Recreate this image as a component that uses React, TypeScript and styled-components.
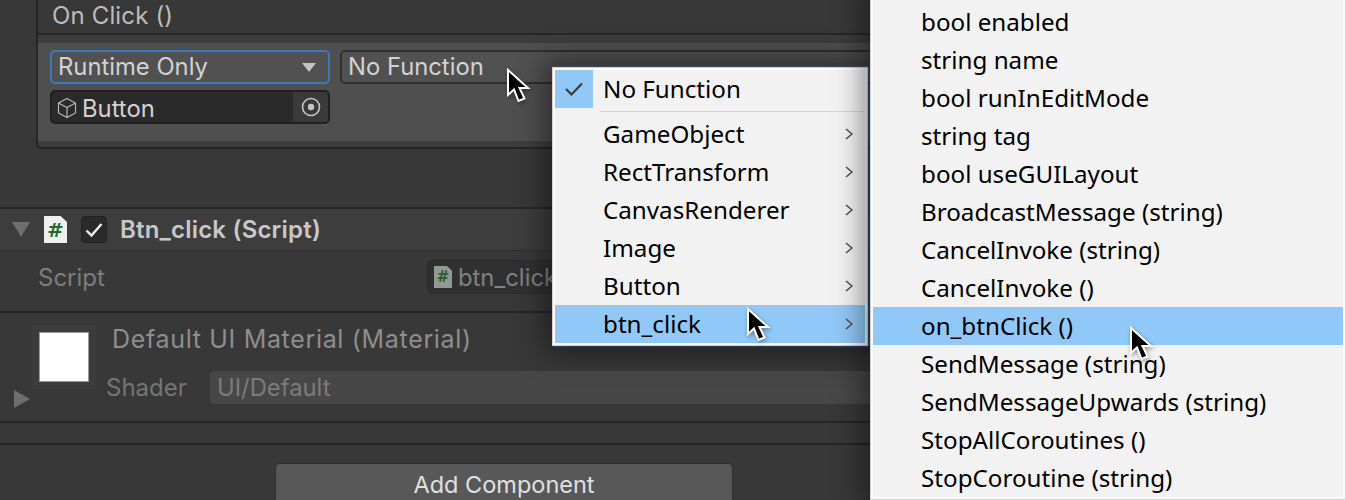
import React from 'react';
import styled, { createGlobalStyle } from 'styled-components';

const GlobalStyle = createGlobalStyle`
  html, body {
    margin: 0;
    padding: 0;
    background: #383838;
    overflow: hidden;
  }
`;

const Page = styled.div`
  position: relative;
  width: 1346px;
  height: 500px;
  overflow: hidden;
  background: #383838;
  font-family: Inter, "Noto Sans", sans-serif;
`;

const Inspector = styled.div`
  display: flex;
  flex-direction: column;
  height: 500px;
`;

/* On Click () event box */
const EventBox = styled.div`
  margin: 0 -10px 0 36px;
  height: 149px;
  flex: none;
  border-left: 2px solid #262626;
  border-bottom: 2px solid #262626;
  border-bottom-left-radius: 5px;
  box-sizing: border-box;
  background: #3d3d3d;
`;

const EventHeader = styled.div`
  height: 35px;
  box-sizing: border-box;
  background: #383838;
  border-bottom: 2px solid #272727;
  padding: 0 0 3px 14px;
  display: flex;
  align-items: center;
  font-size: 24px;
  letter-spacing: 0.15px;
  color: #bdbdbd;
`;

const EventBody = styled.div`
  margin-top: 8px;
  height: 98px;
  box-sizing: border-box;
  background: #4f4f4f;
  padding: 7px 12px;
  display: grid;
  grid-template-columns: 280px 1fr;
  grid-auto-rows: 34px;
  column-gap: 10px;
  row-gap: 6px;
`;

const Dropdown = styled.div<{ $focused?: boolean }>`
  box-sizing: border-box;
  display: flex;
  align-items: center;
  justify-content: space-between;
  padding: 0 8px 2px 6px;
  border-radius: 5px;
  background: #515151;
  border: 2px solid ${(p) => (p.$focused ? '#3a79bb' : '#303030')};
  font-size: 23.8px;
  color: #d2d2d2;
  white-space: nowrap;
`;

const Caret = styled.span`
  width: 0;
  height: 0;
  margin: 2px 4px 0 0;
  border-left: 7px solid transparent;
  border-right: 7px solid transparent;
  border-top: 9px solid #c4c4c4;
`;

const ObjectField = styled.div`
  box-sizing: border-box;
  display: flex;
  align-items: center;
  border-radius: 5px;
  background: #2a2a2a;
  border: 2px solid #212121;
  font-size: 23.8px;
  color: #d2d2d2;
  overflow: hidden;
`;

const ObjectName = styled.span`
  flex: 1;
  display: flex;
  align-items: center;
  gap: 5px;
  padding: 2px 0 0 5px;
`;

const ObjectPicker = styled.span`
  width: 35px;
  align-self: stretch;
  background: #3a3a3a;
  display: flex;
  align-items: center;
  justify-content: center;
`;

/* Btn_click (Script) component */
const ComponentHeader = styled.div`
  margin-top: 58px;
  height: 44px;
  flex: none;
  box-sizing: border-box;
  border-top: 2px solid #272727;
  border-bottom: 1px solid #303030;
  background: #3d3d3d;
  display: flex;
  align-items: center;
  padding-left: 12px;
`;

const FoldDown = styled.span`
  width: 0;
  height: 0;
  border-left: 9px solid transparent;
  border-right: 9px solid transparent;
  border-top: 15px solid #6e6e6e;
  margin-right: 14px;
`;

const ScriptIcon = styled.span<{ $dim?: boolean; $size?: number }>`
  flex: none;
  display: inline-flex;
  align-items: center;
  justify-content: center;
  width: ${(p) => p.$size ?? 23}px;
  height: ${(p) => (p.$size ?? 23) + 4}px;
  background: ${(p) => (p.$dim ? '#8f9a90' : '#efefef')};
  clip-path: polygon(0 0, 72% 0, 100% 22%, 100% 100%, 0 100%);
  color: ${(p) => (p.$dim ? '#2f5a33' : '#1f6b2a')};
  font-family: "DejaVu Sans", sans-serif;
  font-weight: 700;
  font-size: ${(p) => (p.$dim ? 15 : 20)}px;
`;

const Toggle = styled.span`
  width: 26px;
  height: 27px;
  margin: 0 13px 0 14px;
  box-sizing: border-box;
  border-radius: 4px;
  background: #2a2a2a;
  border: 1px solid #222;
  display: flex;
  align-items: center;
  justify-content: center;
`;

const ComponentTitle = styled.span`
  font-size: 24px;
  font-weight: 600;
  letter-spacing: 0.2px;
  color: #c8c8c8;
`;

const ScriptRow = styled.div`
  height: 62px;
  flex: none;
  box-sizing: border-box;
  padding: 9px 0 0 38px;
  display: flex;
  align-items: flex-start;
  border-bottom: 2px solid #252525;
`;

const FieldLabel = styled.span`
  width: 389px;
  line-height: 36px;
  font-size: 24px;
  color: #7d7d7d;
`;

const DisabledField = styled.div`
  flex: 1;
  height: 34px;
  box-sizing: border-box;
  border-radius: 5px;
  background: #303030;
  border: 1px solid #2b2b2b;
  padding-left: 6px;
  display: flex;
  align-items: center;
  gap: 6px;
  font-size: 23.8px;
  color: #808080;
`;

/* material block */
const MaterialRow = styled.div`
  height: 110px;
  flex: none;
  box-sizing: border-box;
  position: relative;
  display: flex;
  border-bottom: 2px solid #252525;
`;

const Preview = styled.div`
  flex: none;
  width: 64px;
  height: 64px;
  margin: 12px 0 0 32px;
  background: #3c3c3c;
  display: flex;
  align-items: center;
  justify-content: center;
`;

const Swatch = styled.div`
  width: 50px;
  height: 50px;
  box-sizing: border-box;
  background: #fff;
  border: 1px solid #9a9a9a;
`;

const FoldRight = styled.span`
  position: absolute;
  left: 14px;
  top: 77px;
  width: 0;
  height: 0;
  border-top: 9px solid transparent;
  border-bottom: 9px solid transparent;
  border-left: 16px solid #6e6e6e;
`;

const MaterialInfo = styled.div`
  flex: 1;
  padding: 9px 0 0 10px;
  display: flex;
  flex-direction: column;
`;

const MaterialTitle = styled.div`
  margin-left: 6px;
  font-size: 25px;
  letter-spacing: 0.67px;
  line-height: 34px;
  color: #8e8e8e;
`;

const ShaderRow = styled.div`
  margin-top: 15px;
  display: flex;
`;

const ShaderLabel = styled.span`
  width: 104px;
  line-height: 33px;
  font-size: 24px;
  color: #757575;
`;

const ShaderField = styled.div`
  flex: 1;
  height: 33px;
  box-sizing: border-box;
  padding-left: 7px;
  border-radius: 4px;
  background: #474747;
  display: flex;
  align-items: center;
  font-size: 23.8px;
  color: #7b7b7b;
`;

const EmptyRow = styled.div`
  height: 20px;
  flex: none;
  border-bottom: 2px solid #252525;
`;

const Footer = styled.div`
  flex: 1;
  padding-top: 18px;
  display: flex;
  padding-left: 275px;
`;

const AddButton = styled.div`
  width: 458px;
  height: 37px;
  box-sizing: border-box;
  padding-top: 6px;
  background: #585858;
  border: 1px solid #2f2f2f;
  border-bottom: none;
  border-radius: 5px 5px 0 0;
  text-align: center;
  font-size: 23.5px;
  line-height: 30px;
  color: #e0e0e0;
`;

/* popup menus, they lie over the inspector */
const Menu = styled.div<{ $left: number; $top: number; $width: number; $height: number; $pad: number }>`
  position: absolute;
  left: ${(p) => p.$left}px;
  top: ${(p) => p.$top}px;
  width: ${(p) => p.$width}px;
  height: ${(p) => p.$height}px;
  box-sizing: border-box;
  padding: ${(p) => p.$pad}px 2px 0;
  background: #f2f2f2;
  border: 1px solid #d0d0d0;
  box-shadow: inset 0 0 0 2px #fbfbfb, 2px 0 3px rgba(66, 120, 190, 0.55), 0 0 26px 8px rgba(0, 0, 0, 0.42);
  font-family: "Noto Sans", sans-serif;
  font-size: 24.2px;
  color: #000;
`;

const Item = styled.div<{ $active?: boolean; $indent: number }>`
  position: relative;
  height: 38px;
  box-sizing: border-box;
  padding-bottom: 2px;
  display: flex;
  align-items: center;
  padding-left: ${(p) => p.$indent}px;
  white-space: nowrap;
  background: ${(p) => (p.$active ? '#90c8f7' : 'transparent')};
`;

const CheckMark = styled.span`
  position: absolute;
  left: 0;
  top: 0;
  width: 38px;
  height: 38px;
  background: #90c8f7;
  display: flex;
  align-items: center;
  justify-content: center;
`;

const Separator = styled.div`
  height: 1px;
  margin: 3px 1px 3px 45px;
  background: #d4d4d4;
`;

const Chevron = styled.svg`
  position: absolute;
  right: 12px;
  top: 13px;
`;

const Pointer = styled.svg<{ $left: number; $top: number }>`
  position: absolute;
  left: ${(p) => p.$left}px;
  top: ${(p) => p.$top}px;
  filter: drop-shadow(1px 2px 2px rgba(0, 0, 0, 0.35));
`;

const Arrow = ({ left, top }: { left: number; top: number }) => (
  <Pointer $left={left} $top={top} width="26" height="38" viewBox="0 0 26 38">
    <path
      d="M2 2 L2 27 L8 21.5 L12.5 33 L18.5 30.5 L13.5 20 L22 20 Z"
      fill="#000"
      stroke="#fff"
      strokeWidth="2"
      strokeLinejoin="miter"
    />
  </Pointer>
);

const More = () => (
  <Chevron width="8" height="12" viewBox="0 0 8 12">
    <path d="M1 1 L7 6 L1 11" fill="none" stroke="#444" strokeWidth="1.3" />
  </Chevron>
);

const firstMenu = ['GameObject', 'RectTransform', 'CanvasRenderer', 'Image', 'Button', 'btn_click'];

const secondMenu = [
  'bool enabled',
  'string name',
  'bool runInEditMode',
  'string tag',
  'bool useGUILayout',
  'BroadcastMessage (string)',
  'CancelInvoke (string)',
  'CancelInvoke ()',
  'on_btnClick ()',
  'SendMessage (string)',
  'SendMessageUpwards (string)',
  'StopAllCoroutines ()',
  'StopCoroutine (string)',
];

export default function App() {
  return (
    <Page>
      <GlobalStyle />
      <Inspector>
        <EventBox>
          <EventHeader>On Click ()</EventHeader>
          <EventBody>
            <Dropdown $focused>
              Runtime Only
              <Caret />
            </Dropdown>
            <Dropdown>No Function</Dropdown>
            <ObjectField>
              <ObjectName>
                <svg width="20" height="22" viewBox="0 0 20 22" fill="none" stroke="#b5b5b5" strokeWidth="1.2">
                  <path d="M10 1.5 L18.5 6 L18.5 16 L10 20.5 L1.5 16 L1.5 6 Z" />
                  <path d="M1.5 6 L10 10.5 L18.5 6 M10 10.5 L10 20.5" />
                </svg>
                Button
              </ObjectName>
              <ObjectPicker>
                <svg width="20" height="20" viewBox="0 0 20 20">
                  <circle cx="10" cy="10" r="8.5" fill="none" stroke="#c4c4c4" strokeWidth="1.6" />
                  <circle cx="10" cy="10" r="3.2" fill="#c4c4c4" />
                </svg>
              </ObjectPicker>
            </ObjectField>
          </EventBody>
        </EventBox>

        <ComponentHeader>
          <FoldDown />
          <ScriptIcon>#</ScriptIcon>
          <Toggle>
            <svg width="18" height="16" viewBox="0 0 18 16">
              <path d="M1.5 8.5 L6.5 13.5 L16.5 2" fill="none" stroke="#eee" strokeWidth="2.4" />
            </svg>
          </Toggle>
          <ComponentTitle>Btn_click (Script)</ComponentTitle>
        </ComponentHeader>

        <ScriptRow>
          <FieldLabel>Script</FieldLabel>
          <DisabledField>
            <ScriptIcon $dim $size={18}>#</ScriptIcon>
            btn_click
          </DisabledField>
        </ScriptRow>

        <MaterialRow>
          <Preview>
            <Swatch />
          </Preview>
          <FoldRight />
          <MaterialInfo>
            <MaterialTitle>Default UI Material (Material)</MaterialTitle>
            <ShaderRow>
              <ShaderLabel>Shader</ShaderLabel>
              <ShaderField>UI/Default</ShaderField>
            </ShaderRow>
          </MaterialInfo>
        </MaterialRow>

        <EmptyRow />

        <Footer>
          <AddButton>Add Component</AddButton>
        </Footer>
      </Inspector>

      <Menu $left={552} $top={67} $width={316} $height={279} $pad={2}>
        <Item $indent={48}>
          <CheckMark>
            <svg width="20" height="16" viewBox="0 0 20 16">
              <path d="M2 8 L7.5 13.5 L18 2.5" fill="none" stroke="#3c3c3c" strokeWidth="2.2" />
            </svg>
          </CheckMark>
          No Function
        </Item>
        <Separator />
        {firstMenu.map((label) => (
          <Item key={label} $indent={48} $active={label === 'btn_click'}>
            {label}
            <More />
          </Item>
        ))}
      </Menu>

      <Menu $left={870} $top={-15} $width={476} $height={515} $pad={17}>
        {secondMenu.map((label) => (
          <Item key={label} $indent={48} $active={label === 'on_btnClick ()'}>
            {label}
          </Item>
        ))}
      </Menu>

      <Arrow left={506} top={68} />
      <Arrow left={746} top={307} />
      <Arrow left={1129} top={326} />
    </Page>
  );
}
